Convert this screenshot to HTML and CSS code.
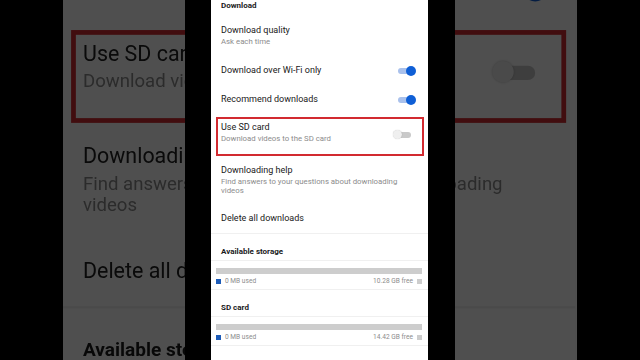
FILE: index.html
```html
<!DOCTYPE html>
<html lang="en">
<head>
<meta charset="utf-8">
<title>Download settings</title>
<link rel="stylesheet" href="styles.css">
</head>
<body>
<div class="stage">
  <div class="backdrop" aria-hidden="true">
    <div class="phone phone-copy">
      <div class="sec-head top">Download</div>
      <div class="row two"><div class="t">Download quality</div><div class="s">Ask each time</div></div>
      <div class="row one"><div class="t">Download over Wi-Fi only</div><span class="tg on"></span></div>
      <div class="row one"><div class="t">Recommend downloads</div><span class="tg on"></span></div>
      <div class="row boxed"><div class="txt"><div class="t">Use SD card</div><div class="s">Download videos to the SD card</div></div><span class="tg off"></span></div>
      <div class="row help"><div class="t">Downloading help</div><div class="s">Find answers to your questions about downloading videos</div></div>
      <div class="row one last"><div class="t">Delete all downloads</div></div>
      <div class="sec-head">Available storage</div>
      <div class="store"><div class="bar"></div><div class="legend"><span class="sq used"></span><span class="lt">0 MB used</span><span class="free">10.28 GB free</span><span class="sq rest"></span></div></div>
      <div class="sec-head">SD card</div>
      <div class="store"><div class="bar"></div><div class="legend"><span class="sq used"></span><span class="lt">0 MB used</span><span class="free">14.42 GB free</span><span class="sq rest"></span></div></div>
    </div>
  </div>
  <div class="frame">
    <div class="phone">
      <div class="sec-head top">Download</div>
      <div class="row two"><div class="t">Download quality</div><div class="s">Ask each time</div></div>
      <div class="row one"><div class="t">Download over Wi-Fi only</div><span class="tg on"></span></div>
      <div class="row one"><div class="t">Recommend downloads</div><span class="tg on"></span></div>
      <div class="row boxed"><div class="txt"><div class="t">Use SD card</div><div class="s">Download videos to the SD card</div></div><span class="tg off"></span></div>
      <div class="row help"><div class="t">Downloading help</div><div class="s">Find answers to your questions about downloading videos</div></div>
      <div class="row one last"><div class="t">Delete all downloads</div></div>
      <div class="sec-head">Available storage</div>
      <div class="store"><div class="bar"></div><div class="legend"><span class="sq used"></span><span class="lt">0 MB used</span><span class="free">10.28 GB free</span><span class="sq rest"></span></div></div>
      <div class="sec-head">SD card</div>
      <div class="store"><div class="bar"></div><div class="legend"><span class="sq used"></span><span class="lt">0 MB used</span><span class="free">14.42 GB free</span><span class="sq rest"></span></div></div>
    </div>
  </div>
</div>
</body>
</html>
```

FILE: styles.css
```css
* { box-sizing: border-box; margin: 0; padding: 0; }
html, body { width: 640px; height: 360px; overflow: hidden; background: #000; }
body { font-family: Roboto, "Noto Sans", sans-serif; }

.stage { position: relative; width: 640px; height: 360px; background: #000; overflow: hidden; }

.backdrop {
  position: absolute;
  left: 63px; top: 0;
  width: 514px; height: 360px;
  background: #4f4f4f;
  overflow: hidden;
}
.phone-copy {
  margin-left: 148px;
  transform-origin: 110px 180px;
  transform: scale(2.38);
  filter: brightness(0.31);
}

.frame {
  position: relative;
  width: 270px; height: 360px;
  margin-left: 185px;
  padding: 0 27px 0 26px;
  background: #000;
}

.phone {
  width: 217px; height: 360px;
  background: #fff;
  overflow: hidden;
  color: #212121;
}

.sec-head {
  font-size: 8px; font-weight: 700; line-height: 10px;
  padding: 13px 10px 3px;
  border-bottom: 1px solid #f0f0f0;
  color: #1a1a1a;
}
.sec-head.top { padding: 1px 10px 3px; border-bottom: none; }

.row { position: relative; display: flex; flex-direction: column; justify-content: center; padding: 0 10px; }
.t { font-size: 9px; line-height: 11px; color: #202020; }
.s { font-size: 7.8px; line-height: 9px; color: #8c8c8c; margin-top: 1px; }

.row.two { height: 42px; padding-top: 1px; }
.row.one { height: 29px; flex-direction: row; align-items: center; justify-content: space-between; }
.row.one.last { border-bottom: 1px solid #f0f0f0; height: 30px; }

.row.boxed {
  height: 39px; margin: 3px 4px 0 5px;
  border: 2px solid #d22a30;
  padding: 3px 11px 0 3px;
  flex-direction: row; align-items: flex-start; justify-content: space-between;
}
.row.boxed .tg.off { margin-top: 8px; }
.row.help { height: 48px; padding-right: 18px; }

.tg { position: relative; display: block; flex: none; }
.tg.on { width: 18px; height: 10px; margin-right: 2px; }
.tg.on::before { content: ""; position: absolute; left: 0; top: 2px; width: 14px; height: 6px; border-radius: 3px; background: #a9c1ec; }
.tg.on::after { content: ""; position: absolute; right: 0; top: 0; width: 10px; height: 10px; border-radius: 50%; background: #0f5fd6; }
.tg.off { width: 18px; height: 9px; }
.tg.off::before { content: ""; position: absolute; left: 3px; top: 1.5px; width: 15px; height: 6px; border-radius: 3px; background: #c9c9c9; }
.tg.off::after { content: ""; position: absolute; left: 0; top: 0; width: 9px; height: 9px; border-radius: 50%; background: #efefef; box-shadow: 0 0 1px rgba(0,0,0,.25); }

.store { padding: 7px 6px 0 5px; height: 29px; border-bottom: 1px solid #f0f0f0; }
.bar { height: 6px; background: #cdcdcd; }
.legend { display: flex; align-items: center; height: 14px; font-size: 6.6px; color: #8c8c8c; }
.sq { width: 5px; height: 5px; flex: none; }
.sq.used { background: #1c5bb8; margin-right: 4px; }
.sq.rest { background: #cdcdcd; margin-left: 4px; }
.free { margin-left: auto; }
```
